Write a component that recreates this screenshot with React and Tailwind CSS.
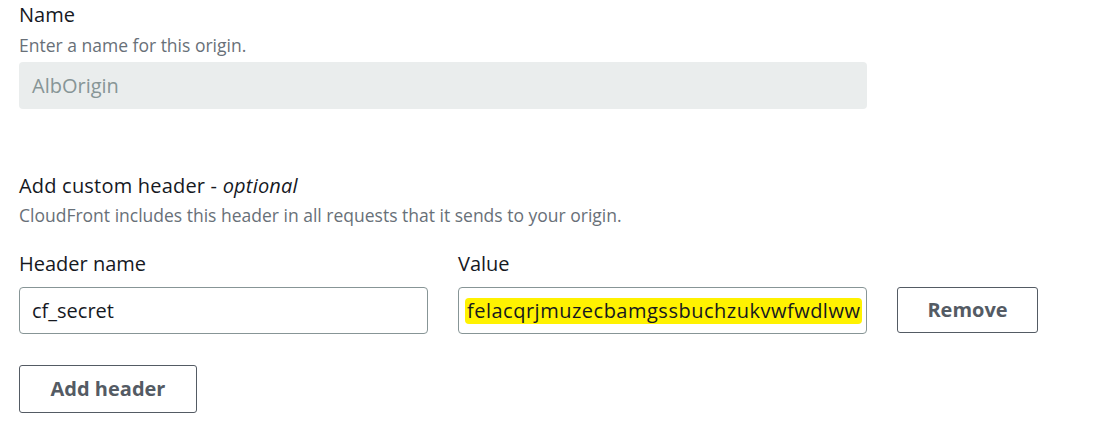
export default function App() {
  const font = { fontFamily: '"Open Sans", "Noto Sans", sans-serif' };
  return (
    <div className="w-[1108px] h-[421px] bg-white text-[#16191f]" style={font}>
      <div className="pl-[19px] pt-[2px] w-[867px]">
        <div className="text-[20px] leading-[26px]">Name</div>
        <div className="text-[17.5px] leading-[22px] text-[#687078] mt-[6px]">Enter a name for this origin.</div>
        <div className="mt-[6px] h-[47px] rounded-[4px] bg-[#eaeded] flex items-center px-[13px] text-[20px] text-[#879596]">
          AlbOrigin
        </div>
        <div className="mt-[64px] text-[20px] leading-[26px] tracking-[0.2px]">
          Add custom header - <span className="italic">optional</span>
        </div>
        <div className="text-[17.5px] leading-[22px] text-[#687078] mt-[5px]">
          CloudFront includes this header in all requests that it sends to your origin.
        </div>
      </div>
      <div className="pl-[19px] mt-[25px] flex items-end gap-[30px]">
        <div className="flex flex-col w-[409px]">
          <div className="text-[20px] leading-[26px]">Header name</div>
          <div className="mt-[10px] h-[47px] border border-[#879596] rounded-[4px] flex items-center px-[12px] text-[20px]">
            cf_secret
          </div>
        </div>
        <div className="flex flex-col w-[409px]">
          <div className="text-[20px] leading-[26px]">Value</div>
          <div className="mt-[10px] h-[47px] border border-[#879596] rounded-[4px] flex items-center px-[6px] text-[20px] overflow-hidden">
            <span className="bg-[#fff200] rounded-[4px] px-[2px] leading-[26px] whitespace-nowrap w-[398px] tracking-[0.5px]">
              felacqrjmuzecbamgssbuchzukvwfwdlww
            </span>
          </div>
        </div>
        <div className="h-[46px] w-[141px] mb-[1px] border border-[#545b64] rounded-[3px] flex items-center justify-center text-[20px] font-bold text-[#545b64]">
          Remove
        </div>
      </div>
      <div className="pl-[19px] mt-[31px]">
        <div className="h-[48px] w-[178px] border border-[#545b64] rounded-[3px] flex items-center justify-center text-[20px] font-bold text-[#545b64]">
          Add header
        </div>
      </div>
    </div>
  );
}
